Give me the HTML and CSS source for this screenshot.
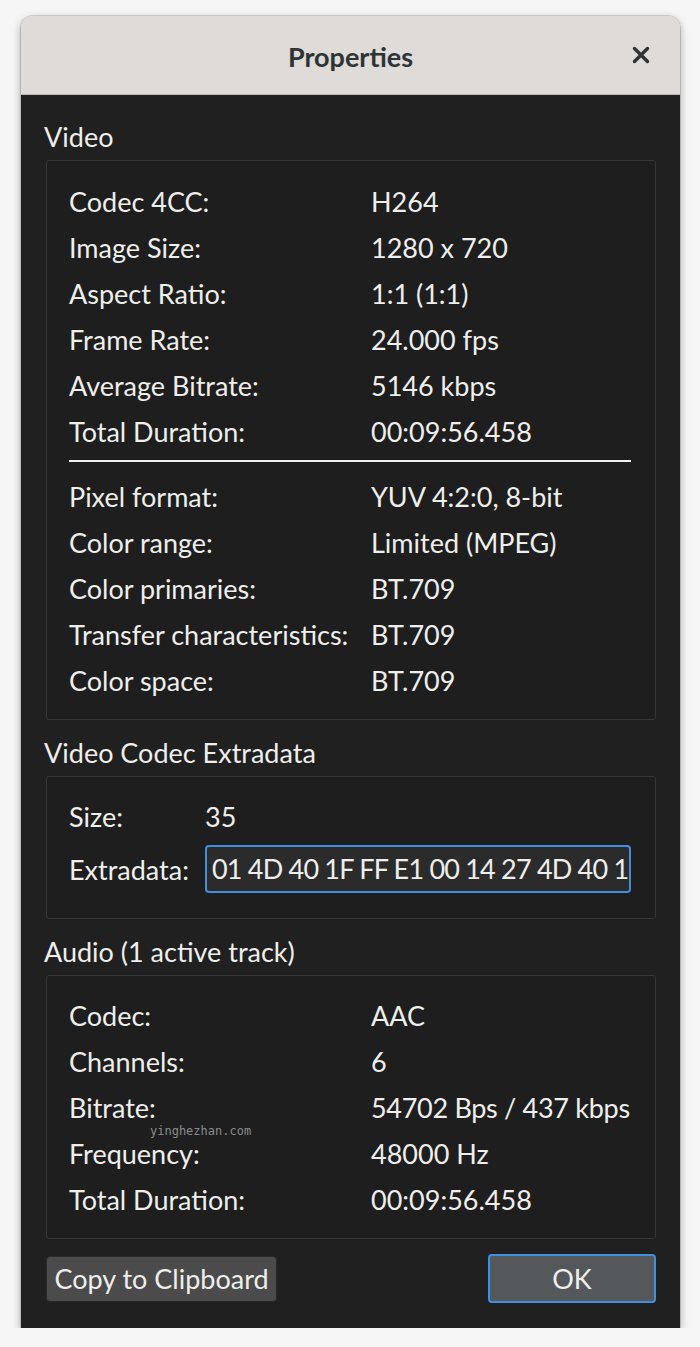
FILE: index.html
```html
<!DOCTYPE html>
<html lang="en">
<head>
  <meta charset="UTF-8" />
  <title>Properties</title>
  <link rel="stylesheet" href="styles.css">
</head>
<body>
  <div class="window">
    <div class="titlebar">
      <span class="title">Properties</span>
      <span class="close">
        <svg width="18" height="18" viewBox="0 0 18 18"><path d="M2.5 2.5 L15.5 15.5 M15.5 2.5 L2.5 15.5" stroke="#2e3436" stroke-width="3.4" stroke-linecap="round"/></svg>
      </span>
    </div>

    <div class="content">
      <h2>Video</h2>
      <div class="group">
        <div class="rows">
          <div class="row"><span class="label">Codec 4CC:</span><span>H264</span></div>
          <div class="row"><span class="label">Image Size:</span><span>1280 x 720</span></div>
          <div class="row"><span class="label">Aspect Ratio:</span><span>1:1 (1:1)</span></div>
          <div class="row"><span class="label">Frame Rate:</span><span>24.000 fps</span></div>
          <div class="row"><span class="label">Average Bitrate:</span><span>5146 kbps</span></div>
          <div class="row"><span class="label">Total Duration:</span><span>00:09:56.458</span></div>
        </div>
        <div class="separator"></div>
        <div class="rows">
          <div class="row"><span class="label">Pixel format:</span><span>YUV 4:2:0, 8-bit</span></div>
          <div class="row"><span class="label">Color range:</span><span>Limited (MPEG)</span></div>
          <div class="row"><span class="label">Color primaries:</span><span>BT.709</span></div>
          <div class="row"><span class="label">Transfer characteristics:</span><span>BT.709</span></div>
          <div class="row"><span class="label">Color space:</span><span>BT.709</span></div>
        </div>
      </div>

      <h2>Video Codec Extradata</h2>
      <div class="group extra">
        <div class="row"><span class="label">Size:</span><span>35</span></div>
        <div class="row"><span class="label">Extradata:</span><div class="entry">01 4D 40 1F FF E1 00 14 27 4D 40 1</div></div>
      </div>

      <h2>Audio (1 active track)</h2>
      <div class="group audio">
        <div class="rows">
          <div class="row"><span class="label">Codec:</span><span>AAC</span></div>
          <div class="row"><span class="label">Channels:</span><span>6</span></div>
          <div class="row"><span class="label">Bitrate:</span><span class="tight">54702 Bps / 437 kbps</span></div>
          <div class="row"><span class="label">Frequency:</span><span>48000 Hz</span></div>
          <div class="row"><span class="label">Total Duration:</span><span>00:09:56.458</span></div>
        </div>
        <span class="watermark">yinghezhan.com</span>
      </div>

      <div class="buttons">
        <button class="btn">Copy to Clipboard</button>
        <button class="btn ok">OK</button>
      </div>
    </div>
  </div>
</body>
</html>
```

FILE: styles.css
```css
body {
  margin: 0;
  background: #f6f6f6;
  font-family: Lato, "Noto Sans", sans-serif;
  color: #eeeeec;
}
.window {
  width: 659px;
  margin: 16px 0 0 21px;
  border-radius: 12px 12px 0 0;
  box-shadow: 0 3px 9px rgba(0, 0, 0, 0.35), 0 0 0 1px rgba(0, 0, 0, 0.12);
  overflow: hidden;
}
.titlebar {
  position: relative;
  height: 78px;
  background: #dedbd8;
  border-bottom: 1px solid #bfb8b1;
  display: flex;
  align-items: center;
  justify-content: center;
}
.title {
  font-size: 27px;
  font-weight: bold;
  color: #2e3436;
  margin-top: 2px;
}
.close {
  position: absolute;
  right: 30px;
  top: 30px;
  display: flex;
}
.content {
  background: #202020;
  padding: 9px 24px 25px 25px;
}
h2 {
  font-size: 27px;
  font-weight: normal;
  line-height: 30px;
  margin: 18px 0 8px -2px;
}
.group {
  position: relative;
  border: 1px solid #363636;
  border-radius: 3px;
  background: #1e1e1e;
  padding: 17px 24px 16px 22px;
}
.row {
  display: grid;
  grid-template-columns: 302px 1fr;
  align-items: center;
  height: 46px;
  font-size: 27px;
  white-space: nowrap;
}
.tight {
  letter-spacing: -0.3px;
}
.separator {
  height: 2px;
  background: #f0f0f0;
  margin: 6px 0 11px;
}
.extra {
  padding: 16px 24px 25px 22px;
}
.extra .row {
  grid-template-columns: 136px 1fr;
}
.extra .row + .row {
  height: 48px;
  margin-top: 6px;
}
.entry {
  height: 44px;
  line-height: 44px;
  border: 2px solid #3f8ee0;
  border-radius: 4px;
  background: #2b2b2b;
  padding: 0 2px 0 5px;
  letter-spacing: -0.8px;
  overflow: hidden;
}
.audio {
  padding: 16px 24px 16px 22px;
}
.watermark {
  position: absolute;
  left: 103px;
  top: 148px;
  font-family: "DejaVu Sans Mono", monospace;
  font-size: 12px;
  color: #8a8a8a;
}
.buttons {
  display: flex;
  justify-content: space-between;
  align-items: center;
  margin-top: 15px;
}
.btn {
  font-family: inherit;
  font-size: 27px;
  color: #eeeeec;
  background: #4b4b4b;
  border: 1px solid #2a2a2a;
  border-radius: 4px;
  height: 46px;
  width: 231px;
  padding: 0;
}
.ok {
  width: 168px;
  height: 49px;
  background: #55585b;
  border: 2px solid #3f8ee0;
}
```
